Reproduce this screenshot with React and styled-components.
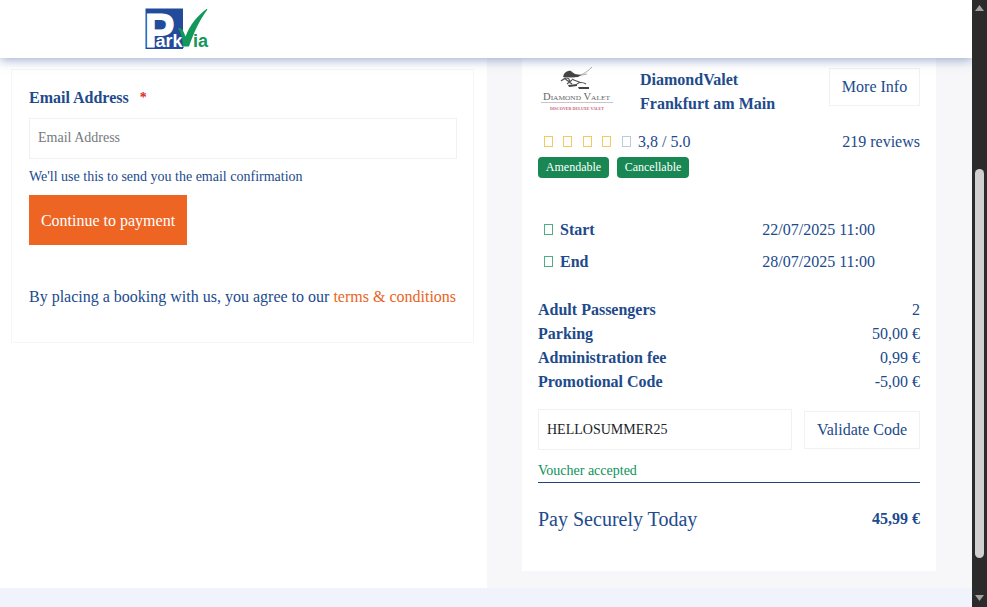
import React from 'react';
import styled, { createGlobalStyle } from 'styled-components';

const GlobalStyle = createGlobalStyle`
  * {
    box-sizing: border-box;
  }

  body {
    background: #f0f2fc;
    color: #214a8c;
    font-family: "Liberation Serif", "Times New Roman", serif;
    font-size: 16px;
    line-height: 24px;
    margin: 0;
    overflow: hidden;
  }
`;

const Window = styled.div`
  display: flex;
  height: 607px;
  overflow: hidden;
  width: 987px;
`;

const Page = styled.div`
  flex: 1;
  min-width: 0;
`;

const Header = styled.header`
  background: #fff;
  box-shadow: 0 2px 10px rgba(60, 90, 160, 0.5);
  height: 58px;
  padding: 8px 0 0 145px;
  position: relative;
  z-index: 1;
`;

const Drawing = styled.svg`
  display: block;
  overflow: visible;
`;

const SmallCaps = styled.text`
  font-variant: small-caps;
`;

const Columns = styled.main`
  background: #f7f7f9;
  display: flex;
  height: 530px;
`;

const FormColumn = styled.section`
  background: #fff;
  padding: 11px 13px 0 11px;
  width: 487px;
`;

const FormCard = styled.form`
  border: 1px solid #f6f6f8;
  height: 274px;
  padding: 16px 16px 0 17px;
`;

const Label = styled.label`
  display: block;
  font-weight: bold;
  height: 24px;
`;

const Required = styled.span`
  color: #d92a1c;
  font-size: 14px;
  line-height: 1;
  margin-left: 7px;
  vertical-align: 1px;
`;

const Input = styled.input`
  background: #fff;
  border: 1px solid #f1f1f4;
  color: #212529;
  display: block;
  font-family: inherit;
  font-size: 14px;
  height: 41px;
  outline: none;
  padding: 0 8px;
  width: ${props => props.$width || '100%'};

  &::placeholder {
    color: #75797e;
    opacity: 1;
  }
`;

const EmailInput = styled(Input)`
  margin-top: 8px;
  padding-bottom: 2px;
`;

const Hint = styled.div`
  font-size: 14px;
  line-height: 21px;
  margin-top: 7px;
`;

const PrimaryButton = styled.button`
  background: #ee6423;
  border: 0;
  color: #fff;
  display: block;
  font-family: inherit;
  font-size: 16px;
  height: 50px;
  margin-top: 8px;
  padding: 2px 0 0;
  width: 158px;
`;

const Terms = styled.p`
  margin: 40px 0 0;
  white-space: nowrap;

  a {
    color: #ea6424;
    text-decoration: none;
  }
`;

const SummaryCard = styled.aside`
  background: #fff;
  height: 513px;
  margin-left: 35px;
  padding: 10px 16px 0;
  width: 414px;
`;

const Row = styled.div`
  display: flex;
  justify-content: space-between;
`;

const Provider = styled.h2`
  flex: 1;
  font-size: 16px;
  margin: 0 0 0 25px;
`;

const OutlineButton = styled.button`
  background: #fff;
  border: 1px solid #f1f1f5;
  color: #214a8c;
  font-family: inherit;
  font-size: 16px;
  height: 38px;
  padding: 0;
  width: ${props => props.$width};
`;

const RatingRow = styled(Row)`
  margin-top: 14px;
`;

const Glyph = styled.i`
  border: 1px solid ${props => props.$color};
  display: inline-block;
  height: 11px;
  width: 9px;
`;

const Rating = styled.div`
  align-items: center;
  display: flex;
  gap: 10.4px;
  padding-left: 6px;

  ${Glyph} {
    margin-bottom: 1px;
  }
`;

const Score = styled.span`
  margin-left: -3px;
`;

const Badges = styled.div`
  display: flex;
  gap: 8px;
  margin-top: 3px;
`;

const Badge = styled.span`
  background: #198754;
  border-radius: 4px;
  color: #fff;
  font-size: 12px;
  height: 21px;
  line-height: 20px;
  text-align: center;
  width: ${props => props.$width};
`;

const Dates = styled.div`
  display: flex;
  flex-direction: column;
  gap: 8px;
  margin-top: 40px;
  padding: 0 45px 0 6px;
`;

const DateName = styled.strong`
  ${Glyph} {
    margin-right: 7px;
  }
`;

const Prices = styled.div`
  margin-top: 24px;
`;

const VoucherRow = styled(Row)`
  align-items: center;
  margin-top: 15px;
`;

const VoucherStatus = styled.div`
  border-bottom: 1px solid #27437f;
  color: #0c9158;
  font-size: 14px;
  height: 33px;
  line-height: 21px;
  padding-top: 10px;
`;

const TotalRow = styled(Row)`
  line-height: 30px;
  margin-top: 21px;
`;

const TotalLabel = styled.span`
  font-size: 20px;
`;

const Scrollbar = styled.div`
  align-items: center;
  background: #2b2b2b;
  display: flex;
  flex-direction: column;
  justify-content: space-between;
  padding: 5px 0 6px;
  position: relative;
  width: 15px;
  z-index: 2;
`;

const Thumb = styled.div`
  background: #d0d0d0;
  border-radius: 5px;
  height: 389px;
  margin-top: 121px;
  width: 9px;
`;

const Logo = () => (
  <Drawing width="64" height="42" viewBox="0 0 64 42" fontFamily="Liberation Sans, Arial, sans-serif" fontWeight="bold">
    <path fill="#224b9b" d="M.5.5H38V41H.5z" />
    <text x="-0.500" y="38.500" fontSize="48" fill="#fff" stroke="#fff" strokeWidth="1.200" textLength="30" lengthAdjust="spacingAndGlyphs">P</text>
    <text x="10.500" y="39" fontSize="18" fill="#fff" stroke="#224b9b" strokeWidth="1.600" paintOrder="stroke" textLength="27" lengthAdjust="spacingAndGlyphs">ark</text>
    <path fill="#12985a" d="M33 20c4 0 5.500 2.500 7.500 8.500C45 17 52 8 61.500 1l1 .5C54 13 49 24 44 38.500h-6c-.5-8-2-14-5-18.500z" />
    <text x="48" y="39" fontSize="18" fill="#12985a" textLength="15" lengthAdjust="spacingAndGlyphs">ia</text>
  </Drawing>
);

const ValetLogo = () => (
  <Drawing width="77" height="48" viewBox="0 0 77 48" fontFamily="Liberation Serif, serif">
    <path fill="none" stroke="#999" strokeWidth="0.800" d="M35 8c8 0 13-3 19-9M35 9l14-3" />
    <path fill="#444" d="M26 6c3-4 7-4 8-2l3 2 6 1-3 2-7 .5-8-.5z" />
    <path fill="none" stroke="#555" strokeWidth="1.200" d="M23 13c4-3 5-4 8-2l1 4M26 10l8 6M34 11c3 2 6 2 9 4M29 16l5-4M39 16c2-2 6-2 9 0" />
    <path fill="#444" d="M30 17l9-1v2l-8 1zM40 19h11v2H41z" />
    <SmallCaps x="5" y="32" fontSize="10" fill="#666" textLength="67" lengthAdjust="spacingAndGlyphs">
      Diamond Valet
    </SmallCaps>
    <path stroke="#c9c5c9" d="M3 34.500h72" />
    <text x="12" y="42" fontSize="5" fontWeight="bold" fill="#c86478" textLength="54" lengthAdjust="spacingAndGlyphs">DISCOVER DELUXE VALET</text>
  </Drawing>
);

const stars = ['#f5c95e', '#f5c95e', '#f5c95e', '#f5c95e', '#b9cbd9'];

const dates = [
  { name: 'Start', value: '22/07/2025 11:00' },
  { name: 'End', value: '28/07/2025 11:00' },
];

const prices = [
  { name: 'Adult Passengers', value: '2' },
  { name: 'Parking', value: '50,00 €' },
  { name: 'Administration fee', value: '0,99 €' },
  { name: 'Promotional Code', value: '-5,00 €' },
];

const EmailForm = () => (
  <FormColumn>
    <FormCard onSubmit={e => e.preventDefault()}>
      <Label htmlFor="email">
        Email Address <Required>*</Required>
      </Label>
      <EmailInput id="email" type="email" placeholder="Email Address" />
      <Hint>We'll use this to send you the email confirmation</Hint>
      <PrimaryButton type="submit">Continue to payment</PrimaryButton>
      <Terms>
        By placing a booking with us, you agree to our <a href="#terms">terms &amp; conditions</a>
      </Terms>
    </FormCard>
  </FormColumn>
);

const Summary = () => (
  <SummaryCard>
    <Row>
      <ValetLogo />
      <Provider>
        DiamondValet
        <br />
        Frankfurt am Main
      </Provider>
      <OutlineButton $width="91px">More Info</OutlineButton>
    </Row>
    <RatingRow>
      <Rating>
        {stars.map((color, i) => (
          <Glyph key={i} $color={color} />
        ))}
        <Score>3,8 / 5.0</Score>
      </Rating>
      <span>219 reviews</span>
    </RatingRow>
    <Badges>
      <Badge $width="71px">Amendable</Badge>
      <Badge $width="72px">Cancellable</Badge>
    </Badges>
    <Dates>
      {dates.map(date => (
        <Row key={date.name}>
          <DateName>
            <Glyph $color="#4fae88" />
            {date.name}
          </DateName>
          <span>{date.value}</span>
        </Row>
      ))}
    </Dates>
    <Prices>
      {prices.map(price => (
        <Row key={price.name}>
          <strong>{price.name}</strong>
          <span>{price.value}</span>
        </Row>
      ))}
    </Prices>
    <VoucherRow>
      <Input $width="254px" defaultValue="HELLOSUMMER25" />
      <OutlineButton $width="116px">Validate Code</OutlineButton>
    </VoucherRow>
    <VoucherStatus>Voucher accepted</VoucherStatus>
    <TotalRow>
      <TotalLabel>Pay Securely Today</TotalLabel>
      <strong>45,99 €</strong>
    </TotalRow>
  </SummaryCard>
);

const App = () => (
  <Window>
    <GlobalStyle />
    <Page>
      <Header>
        <Logo />
      </Header>
      <Columns>
        <EmailForm />
        <Summary />
      </Columns>
    </Page>
    <Scrollbar>
      <svg width="9" height="6" viewBox="0 0 9 6">
        <path fill="#a0a0a0" d="M0 6 4.500 0 9 6z" />
      </svg>
      <Thumb />
      <svg width="9" height="6" viewBox="0 0 9 6">
        <path fill="#a0a0a0" d="M0 0h9L4.500 6z" />
      </svg>
    </Scrollbar>
  </Window>
);

export default App;
